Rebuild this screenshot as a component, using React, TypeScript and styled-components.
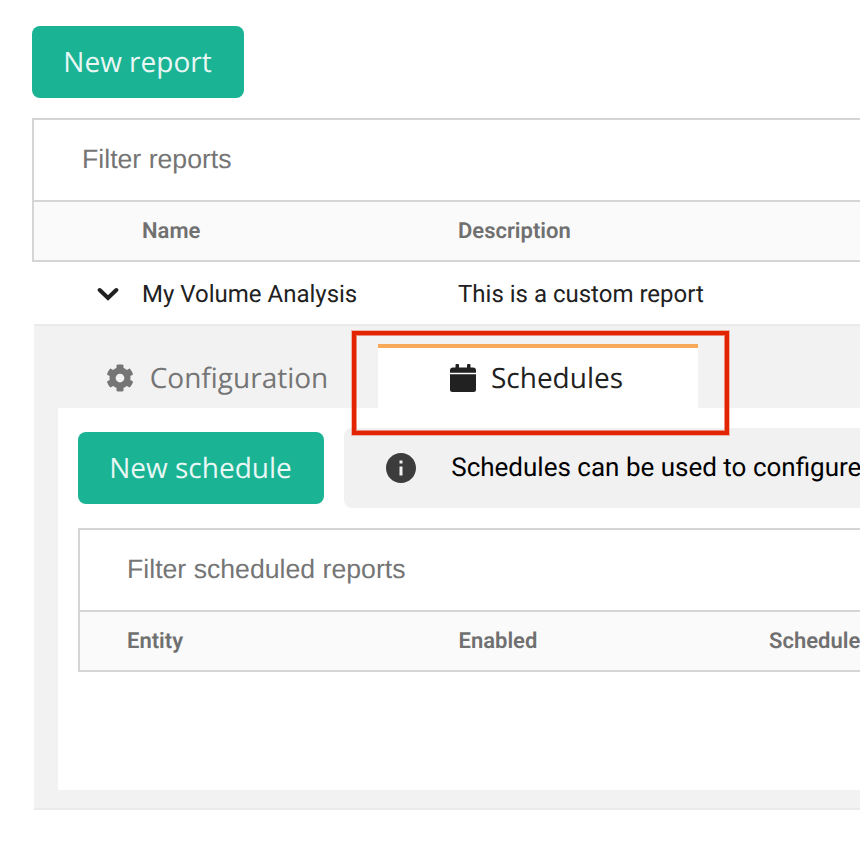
import React from "react";
import styled, { createGlobalStyle } from "styled-components";
import { FaCog } from "react-icons/fa";
import { MdInfo } from "react-icons/md";

const GlobalStyle = createGlobalStyle`
  * { box-sizing: border-box; }
  html, body { margin: 0; background: #fff; overflow: hidden; }
`;

const Page = styled.main`
  width: 860px;
  height: 850px;
  padding: 26px 0 0 32px;
  overflow: hidden;
  background: #fff;
  color: #212121;
  font-family: Roboto, sans-serif;
  white-space: nowrap;
  text-rendering: geometricPrecision;
`;

const PrimaryButton = styled.button<{ $width: number }>`
  display: block;
  flex: none;
  width: ${(p) => p.$width}px;
  height: 72px;
  padding: 0 1px 0 0;
  border: 0;
  border-radius: 8px;
  background: #1ab394;
  color: #e8f7f4;
  font: 400 28px/72px "Open Sans", sans-serif;
  text-rendering: geometricPrecision;
`;

const TableBox = styled.section`
  border: 2px solid #d5d5d5;
  border-right: 0;
`;

const ReportTable = styled(TableBox)`
  margin-top: 20px;
`;

const FilterInput = styled.input<{ $indent: number }>`
  display: block;
  width: 100%;
  height: 80px;
  padding: 0 0 2px ${(p) => p.$indent}px;
  border: 0;
  outline: 0;
  background: #fff;
  font: 400 26.667px "Liberation Sans", sans-serif;
  text-rendering: geometricPrecision;
  &::placeholder { color: #757575; opacity: 1; }
`;

const HeaderRow = styled.div<{ $columns: string }>`
  display: grid;
  grid-template-columns: ${(p) => p.$columns};
  height: 62px;
  margin-bottom: -2px;
  border-top: 2px solid #d5d5d5;
  border-bottom: 2px solid #d5d5d5;
  background: #fafafa;
  color: #707070;
  font-size: 22px;
  font-weight: 600;
  line-height: 60px;
`;

const Cell = styled.span``;

const ReportRow = styled.div`
  display: grid;
  grid-template-columns: 65px 45px 316px 1fr;
  height: 62px;
  font-size: 24px;
  line-height: 64px;
`;

const Chevron = styled.svg`
  grid-column: 2;
  width: 22px;
  height: 14px;
  margin-top: 25px;
`;

const Details = styled.section`
  height: 486px;
  margin-left: 2px;
  padding: 18px 0 0 24px;
  border-top: 2px solid #eaeaea;
  border-bottom: 2px solid #eaeaea;
  background: #f2f2f2;
`;

const Tabs = styled.nav`
  position: relative;
  display: flex;
  height: 64px;
`;

const Tab = styled.div<{ $active?: boolean }>`
  display: flex;
  align-items: center;
  justify-content: center;
  width: 320px;
  height: 64px;
  padding-top: ${(p) => (p.$active ? 0 : 4)}px;
  padding-right: ${(p) => (p.$active ? 3 : 2)}px;
  border-top: ${(p) => (p.$active ? "4px solid #f7a957" : "0")};
  background: ${(p) => (p.$active ? "#fff" : "transparent")};
  color: ${(p) => (p.$active ? "#212121" : "#757575")};
  font: 400 28px/60px "Open Sans", sans-serif;
  svg { flex: none; }
`;

const TabLabel = styled.span<{ $gap: number }>`
  margin-left: ${(p) => p.$gap}px;
`;

const Highlight = styled.div`
  position: absolute;
  z-index: 2;
  left: 294px;
  top: -13px;
  width: 377px;
  height: 104px;
  border: 4px solid #e22400;
  box-shadow: 0 0 0 1px rgba(226, 36, 0, 0.3), inset 0 0 0 1px rgba(226, 36, 0, 0.5);
`;

const Panel = styled.div`
  height: 382px;
  padding: 20px 0 0 20px;
  background: #fff;
`;

const Actions = styled.div`
  display: flex;
  gap: 20px;
  height: 80px;
  margin-bottom: 20px;
  & > button { margin-top: 4px; }
`;

const Notice = styled.div`
  display: flex;
  align-items: center;
  flex: 1;
  padding-left: 39.4px;
  border-radius: 8px 0 0 8px;
  background: #f1f1f1;
  color: #000;
  font-size: 26px;
  line-height: 80px;
  svg { flex: none; margin-right: 31.8px; color: #3c3c3c; }
`;

const NoticeText = styled.span`
  height: 81px;
`;

const CalendarIcon = () => (
  <svg width="26" height="28" viewBox="0 0 26 28" fill="currentColor">
    <path d="M5.500 1a1 1 0 0 1 1-1H8a1 1 0 0 1 1 1v2.500h8V1a1 1 0 0 1 1-1h1.500a1 1 0 0 1 1 1v2.500H23a3 3 0 0 1 3 3V8.800H0V6.500a3 3 0 0 1 3-3h2.500z" />
    <path d="M0 10.300h26V25.500a2.500 2.500 0 0 1-2.500 2.500H2.500A2.500 2.500 0 0 1 0 25.500z" />
  </svg>
);

export default function App() {
  return (
    <>
      <GlobalStyle />
      <Page>
        <PrimaryButton $width={212}>New report</PrimaryButton>
        <ReportTable>
          <FilterInput $indent={48} placeholder="Filter reports" />
          <HeaderRow $columns="108px 316px 1fr">
            <span />
            <Cell>Name</Cell>
            <Cell>Description</Cell>
          </HeaderRow>
        </ReportTable>
        <ReportRow>
          <Chevron viewBox="0 0 22 14" fill="none" stroke="currentColor" strokeWidth="4">
            <path d="M2.700 3 11 11l8.300-8" strokeLinecap="round" />
          </Chevron>
          <Cell>My Volume Analysis</Cell>
          <Cell>This is a custom report</Cell>
        </ReportRow>
        <Details>
          <Tabs>
            <Tab>
              <FaCog size={28} />
              <TabLabel $gap={16}>Configuration</TabLabel>
            </Tab>
            <Tab $active>
              <CalendarIcon />
              <TabLabel $gap={15}>Schedules</TabLabel>
            </Tab>
            <Highlight />
          </Tabs>
          <Panel>
            <Actions>
              <PrimaryButton $width={246}>New schedule</PrimaryButton>
              <Notice>
                <MdInfo size={36} />
                <NoticeText>Schedules can be used to configure</NoticeText>
              </Notice>
            </Actions>
            <TableBox>
              <FilterInput $indent={47} placeholder="Filter scheduled reports" />
              <HeaderRow $columns="47px 331.500px 310.500px 1fr">
                <span />
                <Cell>Entity</Cell>
                <Cell>Enabled</Cell>
                <Cell>Schedule</Cell>
              </HeaderRow>
            </TableBox>
          </Panel>
        </Details>
      </Page>
    </>
  );
}
